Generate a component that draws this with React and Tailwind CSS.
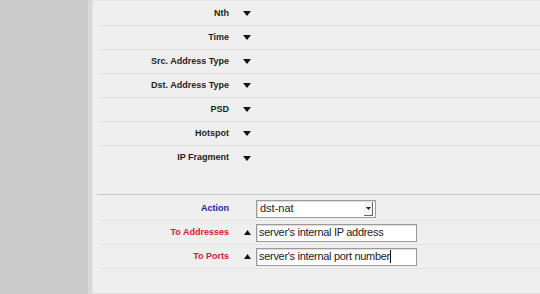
const matchers = ["Nth", "Time", "Src. Address Type", "Dst. Address Type", "PSD", "Hotspot", "IP Fragment"];

const Down = () => (
  <svg width="8" height="5" viewBox="0 0 8 5" className="block">
    <path d="M0 0 L8 0 L4 5 Z" fill="#111" />
  </svg>
);

const Up = () => (
  <svg width="7" height="5" viewBox="0 0 7 5" className="block ml-[1px]">
    <path d="M0 5 L7 5 L3.5 0 Z" fill="#111" />
  </svg>
);

const Row = ({ label, color = "text-[#1e1e1e]", icon, children, last }) => (
  <div className={`flex items-center h-6 ${last ? "" : "border-b border-[#e2e2e2]"}`}>
    <div
      className={`w-[129px] text-right font-bold text-[9px] ${color}`}
      style={{ fontFamily: '"Liberation Sans", sans-serif' }}
    >
      {label}
    </div>
    <div className="w-[27px] flex pl-[14px]">{icon}</div>
    {children}
  </div>
);

const fieldFont = { fontFamily: '"Liberation Sans", sans-serif' };

export default function App() {
  return (
    <div className="w-[540px] h-[294px] flex bg-[#efefef] overflow-hidden">
      {/* side panel */}
      <div className="w-[88px] shrink-0 bg-[#cbcbcb]" />
      <div className="w-[5px] shrink-0 bg-[#d9d9d9] border-r border-[#e4e4e4]" />

      <div className="flex-1 flex flex-col">
        <div className="h-[2px] border-t border-[#e6e6e6]" />
        <div className="flex flex-col pl-[7px]">
          {matchers.map((m, i) => (
            <Row key={m} label={m} icon={<Down />} last={i === matchers.length - 1} />
          ))}
        </div>

        <div className="h-6" />
        <div className="h-px bg-[#c6c6c6] ml-[4px]" />

        <div className="flex flex-col pl-[7px] mt-[2px]">
          <Row label="Action" color="text-[#22229a]">
            <div className="w-[120px] h-[18px] flex items-center bg-white border border-[#9a9a9a] shadow-[inset_1px_1px_1px_rgba(0,0,0,0.15)]">
              <span className="flex-1 pl-[3px] text-[11px] text-[#222]" style={fieldFont}>dst-nat</span>
              <span className="w-[9px] h-[14px] mr-[2px] flex items-center justify-center border-r border-b border-[#666] bg-[#f4f4f4]">
                <svg width="5" height="6" viewBox="0 0 5 6">
                  <path d="M0 2 L5 2 L2.5 5 Z" fill="#222" />
                </svg>
              </span>
            </div>
          </Row>
          <Row label="To Addresses" color="text-[#cc2233]" icon={<Up />}>
            <div className="w-[161px] h-[18px] flex items-center bg-white border border-[#9a9a9a] shadow-[inset_1px_1px_1px_rgba(0,0,0,0.15)]">
              <span className="pl-[2px] text-[11px] text-[#222] tracking-[-0.3px]" style={fieldFont}>server's internal IP address</span>
            </div>
          </Row>
          <Row label="To Ports" color="text-[#cc2233]" icon={<Up />}>
            <div className="w-[161px] h-[18px] flex items-center bg-white border border-[#9a9a9a] shadow-[inset_1px_1px_1px_rgba(0,0,0,0.15)]">
              <span className="pl-[2px] text-[11px] text-[#222] tracking-[-0.3px]" style={fieldFont}>server's internal port number</span>
              <span className="w-px h-[13px] bg-[#111]" />
            </div>
          </Row>
        </div>
        <div className="h-6" />
        <div className="h-px bg-[#dcdcdc]" />
      </div>
    </div>
  );
}
